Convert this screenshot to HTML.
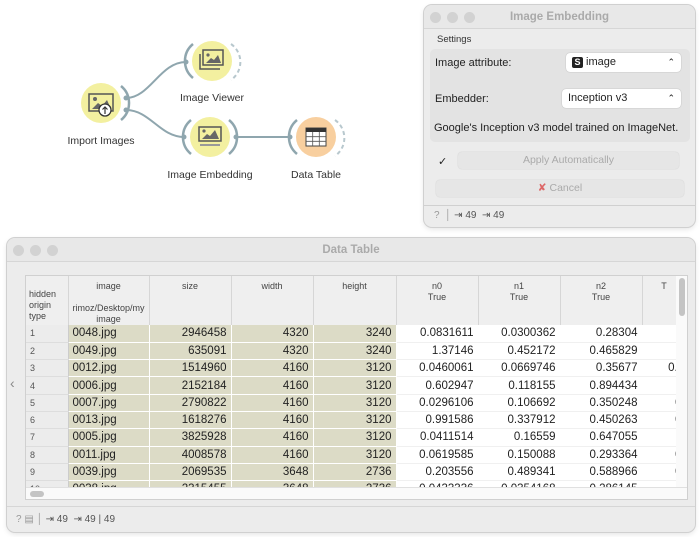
<!DOCTYPE html>
<html><head><meta charset="utf-8"><style>
*{box-sizing:border-box;margin:0;padding:0}
body{width:700px;height:537px;background:#fff;font-family:"Liberation Sans",sans-serif;position:relative;overflow:hidden;color:#222}
.abs{position:absolute}
.win{position:absolute;background:#ececec;border-radius:8px;box-shadow:0 0 0 1px #d0d0d0,0 2px 6px rgba(0,0,0,.12);overflow:hidden}
.tb{position:absolute;left:0;right:0;top:0;height:24px;background:#e8e8e8;border-bottom:1px solid #d6d6d6;text-align:center;font-size:11.5px;font-weight:bold;color:#aaa;line-height:24px}
.dot{position:absolute;top:7px;width:11px;height:11px;border-radius:50%;background:#d2d2d2}
.lbl{position:absolute;font-size:10.5px;color:#333;white-space:nowrap;transform:translateX(-50%)}
table{border-collapse:collapse;font-size:11.5px;table-layout:fixed}
td{height:17.3px;line-height:16px;border-bottom:1px solid #fff;border-right:1px solid #fff;padding:0 4px;text-align:right;white-space:nowrap;overflow:hidden}
td.i{background:#ececec;text-align:left;font-size:9px;color:#555;border-bottom:1px solid #ddd;border-right:1px solid #ccc}
td.m{background:#dcdbc6}
td.l{text-align:left}
td.w{background:#fff;border-bottom:1px solid #f0f0f0}
th{background:#efefef;font-weight:normal;font-size:9px;color:#444;vertical-align:top;border-right:1px solid #d6d6d6;padding-top:5px;height:48px;line-height:11px}
</style></head><body>

<svg class="abs" style="left:0;top:0" width="420" height="230">
<g fill="none" stroke="#8fa6ae" stroke-width="2">
<path d="M126 98 C150 98,160 62,186 62"/>
<path d="M126 110 C150 110,160 137,184 137"/>
<path d="M236 137 L290 137"/>
</g>
<g fill="#8fa6ae"><circle cx="126" cy="98" r="2.5"/><circle cx="126" cy="110" r="2.5"/><circle cx="186" cy="62" r="2.5"/><circle cx="184" cy="137" r="2.5"/><circle cx="236" cy="137" r="2.5"/><circle cx="290" cy="137" r="2.5"/></g>
<g fill="none" stroke="#8fa6ae" stroke-width="2.5">
<path d="M121 86 A22 22 0 0 1 121 120"/>
<path d="M193 44 A22 22 0 0 0 193 78"/>
<path d="M191 120 A22 22 0 0 0 191 154"/>
<path d="M229 120 A22 22 0 0 1 229 154"/>
<path d="M297 120 A22 22 0 0 0 297 154"/>
</g>
<g fill="none" stroke="#b8c8ce" stroke-width="2" stroke-dasharray="4 3">
<path d="M231 44 A22 22 0 0 1 231 80"/>
<path d="M335 120 A22 22 0 0 1 335 156"/>
</g>
<circle cx="101" cy="103" r="20" fill="#f3f0a0"/>
<circle cx="212" cy="61" r="20" fill="#f3f0a0"/>
<circle cx="210" cy="137" r="20" fill="#f3f0a0"/>
<circle cx="316" cy="137" r="20" fill="#f8cf9f"/>
<g fill="none" stroke="#555" stroke-width="1.5">
<rect x="89" y="94" width="24" height="17"/>
<rect x="203" y="50" width="20" height="15"/>
<path d="M200 54 v15 h20" />
<rect x="199" y="127" width="22" height="14"/>
</g>
<g fill="#666">
<path d="M92 109 l6-6 4 3 5-6 4 9z"/><circle cx="95" cy="99" r="2"/>
<path d="M206 63 l5-5 3 2 4-5 3 8z"/><circle cx="208" cy="55" r="1.6"/>
<path d="M202 139 l5-5 3 2 5-6 4 9z"/><circle cx="204" cy="131" r="1.6"/>
<rect x="200" y="144" width="20" height="2" fill="#999"/>
</g>
<circle cx="105" cy="110" r="6" fill="#fff" stroke="#333" stroke-width="1.3"/>
<path d="M105 114 v-7 M102.5 109.5 L105 107 L107.5 109.5" stroke="#333" stroke-width="1.2" fill="none"/>
<rect x="306" y="128" width="20" height="18" fill="#fff" stroke="#444"/>
<rect x="306" y="128" width="20" height="4" fill="#333"/>
<path d="M312.7 132 v14 M319.3 132 v14 M306 136.7 h20 M306 141.3 h20" stroke="#555" stroke-width=".8"/>
</svg>
<div class="lbl" style="left:101px;top:135px">Import Images</div>
<div class="lbl" style="left:212px;top:92px">Image Viewer</div>
<div class="lbl" style="left:210px;top:169px">Image Embedding</div>
<div class="lbl" style="left:316px;top:169px">Data Table</div>

<div class="win" style="left:424px;top:5px;width:271px;height:222px">
<div class="tb">Image Embedding<span class="dot" style="left:6px"></span><span class="dot" style="left:23px"></span><span class="dot" style="left:40px"></span></div>
<div class="abs" style="left:13px;top:29px;font-size:9.5px;color:#333">Settings</div>
<div class="abs" style="left:6px;top:44px;width:260px;height:93px;background:#e3e3e3;border-radius:5px"></div>
<div class="abs" style="left:11px;top:52px;font-size:11px">Image attribute:</div>
<div class="abs" style="left:142px;top:48px;width:115px;height:19px;background:#fff;border-radius:4px;box-shadow:0 0 1px #999;font-size:11px;line-height:19px;padding-left:6px"><span style="display:inline-block;background:#222;color:#fff;font-weight:bold;font-size:9px;width:11px;height:11px;line-height:11px;text-align:center;border-radius:2px">S</span> image<span style="position:absolute;right:6px;font-size:9px">⌃</span></div>
<div class="abs" style="left:11px;top:88px;font-size:11px">Embedder:</div>
<div class="abs" style="left:138px;top:84px;width:119px;height:19px;background:#fff;border-radius:4px;box-shadow:0 0 1px #999;font-size:11px;line-height:19px;padding-left:6px">Inception v3<span style="position:absolute;right:6px;font-size:9px">⌃</span></div>
<div class="abs" style="left:10px;top:117px;font-size:11px">Google's Inception v3 model trained on ImageNet.</div>
<div class="abs" style="left:14px;top:150px;font-size:11px">✓</div>
<div class="abs" style="left:34px;top:147px;width:221px;height:17px;background:#e6e6e6;border-radius:4px;box-shadow:0 0 1px #bbb;font-size:10.5px;color:#aaa;text-align:center;line-height:17px">Apply Automatically</div>
<div class="abs" style="left:12px;top:175px;width:248px;height:17px;background:#e6e6e6;border-radius:4px;box-shadow:0 0 1px #bbb;font-size:10.5px;color:#aaa;text-align:center;line-height:17px"><span style="color:#d66">✘</span> Cancel</div>
<div class="abs" style="left:0;top:200px;width:271px;height:1px;background:#d0d0d0"></div>
<div class="abs" style="left:10px;top:205px;font-size:10px;color:#999">? &nbsp;│ <span style="color:#555">⇥ 49 &nbsp;⇥ 49</span></div>
</div>

<div class="win" style="left:7px;top:238px;width:688px;height:294px">
<div class="tb">Data Table<span class="dot" style="left:6px"></span><span class="dot" style="left:23px"></span><span class="dot" style="left:40px"></span></div>
<div class="abs" style="left:3px;top:137px;font-size:14px;color:#888">‹</div>
<div class="abs" style="left:18px;top:37px;width:663px;height:225px;background:#fff;border:1px solid #d0d0d0;overflow:hidden">
<table style="width:660px">
<colgroup><col style="width:42px"><col style="width:81px"><col style="width:82px"><col style="width:82px"><col style="width:83px"><col style="width:82px"><col style="width:82px"><col style="width:82px"><col style="width:44px"></colgroup>
<tr><th style="text-align:left;vertical-align:bottom;padding:0 3px 3px">hidden<br>origin<br>type</th><th>image<br><br>rimoz/Desktop/my<br>image</th><th>size</th><th>width</th><th>height</th><th>n0<br>True</th><th>n1<br>True</th><th>n2<br>True</th><th>T</th></tr>
<tr><td class="i">1</td><td class="m l">0048.jpg</td><td class="m">2946458</td><td class="m">4320</td><td class="m">3240</td><td class="w">0.0831611</td><td class="w">0.0300362</td><td class="w">0.28304</td><td class="w">(</td></tr>
<tr><td class="i">2</td><td class="m l">0049.jpg</td><td class="m">635091</td><td class="m">4320</td><td class="m">3240</td><td class="w">1.37146</td><td class="w">0.452172</td><td class="w">0.465829</td><td class="w">(</td></tr>
<tr><td class="i">3</td><td class="m l">0012.jpg</td><td class="m">1514960</td><td class="m">4160</td><td class="m">3120</td><td class="w">0.0460061</td><td class="w">0.0669746</td><td class="w">0.35677</td><td class="w">0.(</td></tr>
<tr><td class="i">4</td><td class="m l">0006.jpg</td><td class="m">2152184</td><td class="m">4160</td><td class="m">3120</td><td class="w">0.602947</td><td class="w">0.118155</td><td class="w">0.894434</td><td class="w">(</td></tr>
<tr><td class="i">5</td><td class="m l">0007.jpg</td><td class="m">2790822</td><td class="m">4160</td><td class="m">3120</td><td class="w">0.0296106</td><td class="w">0.106692</td><td class="w">0.350248</td><td class="w">0</td></tr>
<tr><td class="i">6</td><td class="m l">0013.jpg</td><td class="m">1618276</td><td class="m">4160</td><td class="m">3120</td><td class="w">0.991586</td><td class="w">0.337912</td><td class="w">0.450263</td><td class="w">0</td></tr>
<tr><td class="i">7</td><td class="m l">0005.jpg</td><td class="m">3825928</td><td class="m">4160</td><td class="m">3120</td><td class="w">0.0411514</td><td class="w">0.16559</td><td class="w">0.647055</td><td class="w">(</td></tr>
<tr><td class="i">8</td><td class="m l">0011.jpg</td><td class="m">4008578</td><td class="m">4160</td><td class="m">3120</td><td class="w">0.0619585</td><td class="w">0.150088</td><td class="w">0.293364</td><td class="w">0</td></tr>
<tr><td class="i">9</td><td class="m l">0039.jpg</td><td class="m">2069535</td><td class="m">3648</td><td class="m">2736</td><td class="w">0.203556</td><td class="w">0.489341</td><td class="w">0.588966</td><td class="w">0</td></tr>
<tr><td class="i">10</td><td class="m l">0038.jpg</td><td class="m">2315455</td><td class="m">3648</td><td class="m">2736</td><td class="w">0.0433336</td><td class="w">0.0354168</td><td class="w">0.286145</td><td class="w">(</td></tr>
</table>
<div class="abs" style="left:0;top:211px;width:663px;height:14px;background:#fafafa;border-top:1px solid #e0e0e0"><div style="margin:3px 0 0 4px;width:14px;height:6px;border-radius:3px;background:#c4c4c4"></div></div>
<div class="abs" style="left:650px;top:0;width:12px;height:211px;background:#fafafa"><div style="margin:2px 0 0 3px;width:6px;height:38px;border-radius:3px;background:#c4c4c4"></div></div>
</div>
<div class="abs" style="left:0;top:268px;width:688px;height:1px;background:#d6d6d6"></div>
<div class="abs" style="left:9px;top:276px;font-size:10px;color:#999">? ▤ │ <span style="color:#555">⇥ 49 &nbsp;⇥ 49 | 49</span></div>
</div>
</body></html>
